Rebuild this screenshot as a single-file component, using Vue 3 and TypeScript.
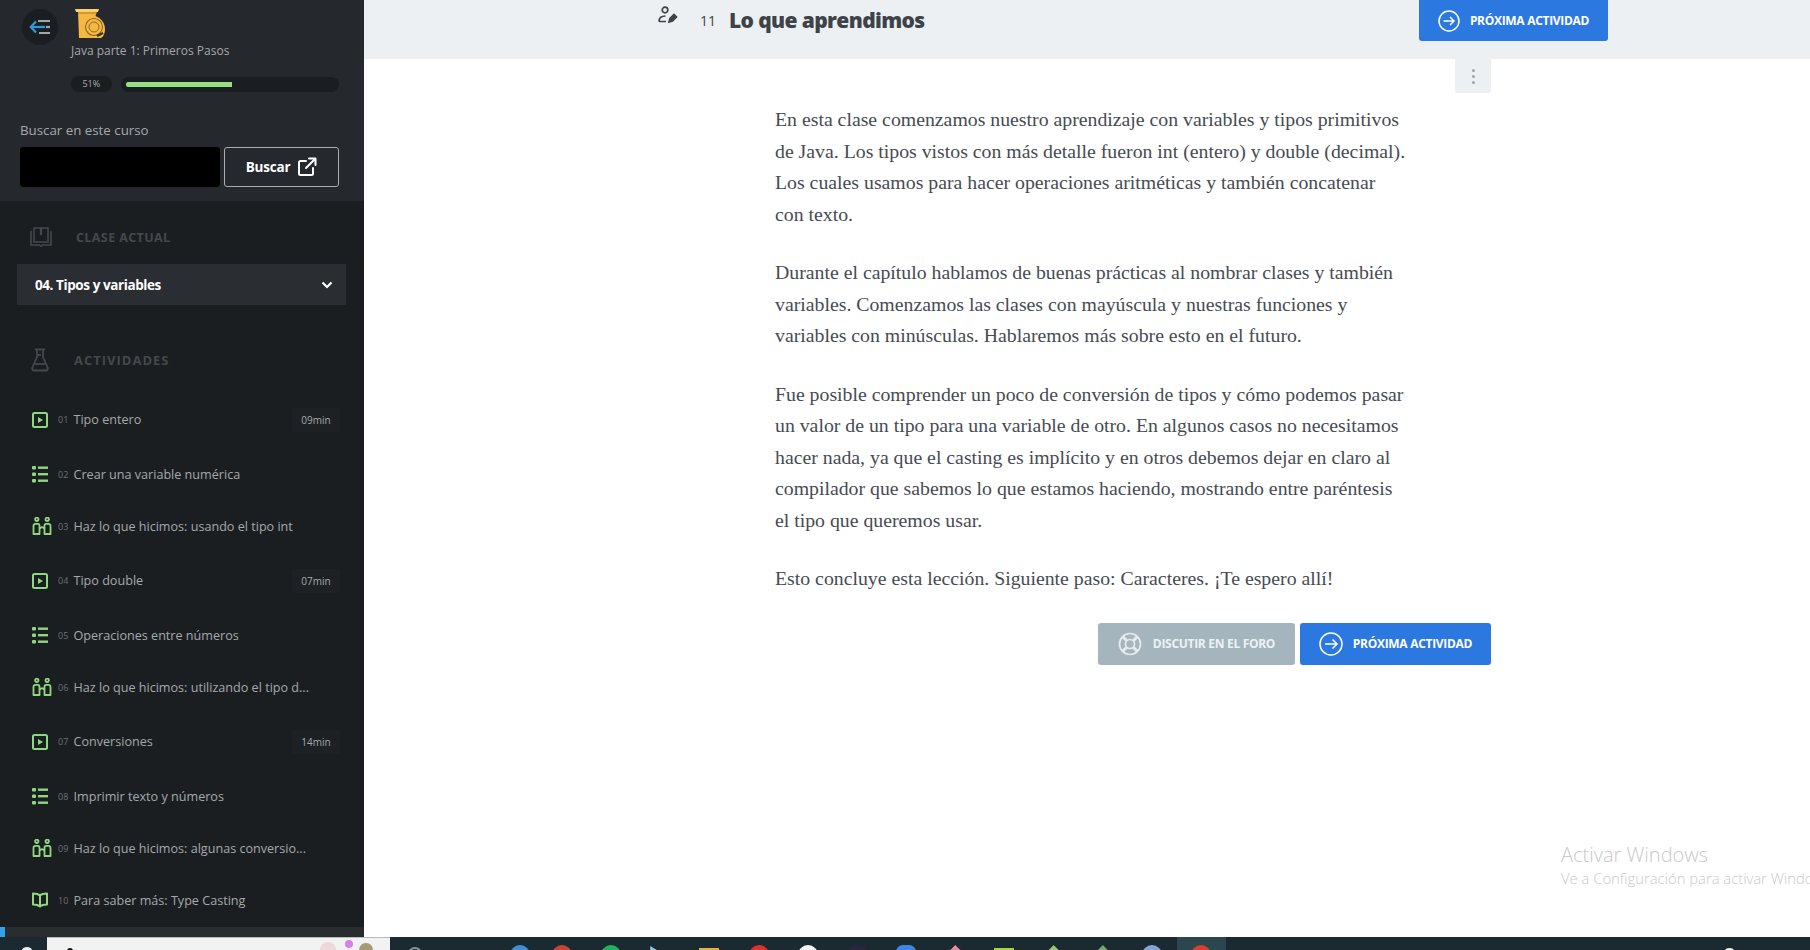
<script setup lang="ts">
type Kind = 'video' | 'list' | 'practice' | 'book'

interface Activity {
  num: string
  title: string
  kind: Kind
  time?: string
}

const activities: Activity[] = [
  { num: '01', title: 'Tipo entero', kind: 'video', time: '09min' },
  { num: '02', title: 'Crear una variable numérica', kind: 'list' },
  { num: '03', title: 'Haz lo que hicimos: usando el tipo int', kind: 'practice' },
  { num: '04', title: 'Tipo double', kind: 'video', time: '07min' },
  { num: '05', title: 'Operaciones entre números', kind: 'list' },
  { num: '06', title: 'Haz lo que hicimos: utilizando el tipo d...', kind: 'practice' },
  { num: '07', title: 'Conversiones', kind: 'video', time: '14min' },
  { num: '08', title: 'Imprimir texto y números', kind: 'list' },
  { num: '09', title: 'Haz lo que hicimos: algunas conversio...', kind: 'practice' },
  { num: '10', title: 'Para saber más: Type Casting', kind: 'book' }
]

const progress = 51

// iconos de la barra de tareas, solo asoma la parte de arriba
const taskIcons = [
  { color: '#3f8fd8', shape: 'round' },
  { color: '#c8452f', shape: 'round' },
  { color: '#1fb45a', shape: 'round' },
  { color: '#8fc4e8', shape: 'tri' },
  { color: '#e3b23c', shape: 'folder' },
  { color: '#d9342c', shape: 'round' },
  { color: '#f5f5f5', shape: 'round' },
  { color: '#2a2440', shape: 'round' },
  { color: '#3d86e6', shape: 'soft' },
  { color: '#e88b9a', shape: 'peak' },
  { color: '#a8d838', shape: 'folder' },
  { color: '#9cc46c', shape: 'peak' },
  { color: '#6fa868', shape: 'peak' },
  { color: '#7ea8dc', shape: 'round' },
  { color: '#d8402c', shape: 'round' }
]
</script>

<template>
  <div class="page">
    <div class="layout">
      <aside class="sidebar">
        <div class="sidebar-scroll">
          <section class="course">
            <div class="course-head">
              <button class="back">
                <svg width="22" height="16" viewBox="0 0 22 16" fill="none" stroke-width="2.2">
                  <path d="M3 8H16" stroke="#2f9bd6" />
                  <path d="M7 2.500 1.800 8 7 13.500" stroke="#2f9bd6" />
                  <path d="M9 2H21M10 14H21" stroke="#9fa5a9" />
                  <path d="M17 8H21" stroke="#9fa5a9" />
                </svg>
              </button>
              <div class="course-info">
                <svg class="logo" width="32" height="31" viewBox="0 0 32 31">
                  <path d="M4 3H23L21.500 8C27 10 31 15 31 21C31 26 29 29 27 30H5Z" fill="#f5b942" />
                  <path d="M1 1H25L24 4H2Z" fill="#fbd06f" />
                  <path d="M4 5H23" stroke="#a9782a" stroke-width="1" />
                  <circle cx="20" cy="19" r="8.500" fill="none" stroke="#8a6a2a" stroke-width="1.100" />
                  <circle cx="20" cy="19" r="5" fill="none" stroke="#8a6a2a" stroke-width="1" />
                  <path d="M23 28 29 25" stroke="#3a3020" stroke-width="2.200" />
                </svg>
                <div class="course-title">Java parte 1: Primeros Pasos</div>
              </div>
            </div>
            <div class="progress-row">
              <span class="percent">{{ progress }}%</span>
              <div class="bar">
                <div class="bar-fill" :style="{ width: progress + '%' }"></div>
              </div>
            </div>
            <label class="search-label">Buscar en este curso</label>
            <div class="search-row">
              <div class="search-input"></div>
              <button class="search-btn">
                Buscar
                <svg width="20" height="20" viewBox="0 0 20 20" fill="none" stroke="#fff" stroke-width="2" stroke-linecap="round" stroke-linejoin="round">
                  <path d="M9 4H3.500A1.500 1.500 0 0 0 2 5.500v11A1.500 1.500 0 0 0 3.500 18h11a1.500 1.500 0 0 0 1.500-1.500V11" />
                  <path d="M12 1.500h6.500V8M18.500 1.500 9 11" />
                </svg>
              </button>
            </div>
          </section>

          <div class="section-head current">
            <svg width="22" height="20" viewBox="0 0 22 20" fill="none" stroke="#44484c" stroke-width="1.600">
              <path d="M4 1H18V15H4ZM1 4V18H9.500L11 19.500 12.500 18H21V4" />
              <path d="M11 1V8" stroke-width="2.200" />
            </svg>
            <span>CLASE ACTUAL</span>
          </div>
          <div class="dropdown">
            <span>04. Tipos y variables</span>
            <svg width="12" height="8" viewBox="0 0 12 8" fill="none" stroke="#fff" stroke-width="2.200">
              <path d="M1.500 1.500 6 6 10.500 1.500" />
            </svg>
          </div>

          <div class="section-head activities">
            <svg width="18" height="24" viewBox="0 0 18 24" fill="none" stroke="#44484c" stroke-width="1.800" stroke-linejoin="round">
              <path d="M4 1.500H14M6 1.500V9L1.500 19.500A2 2 0 0 0 3.500 22.500H14.500A2 2 0 0 0 16.500 19.500L12 9V1.500M6 7H10" />
              <path d="M3.500 16H14.500" />
            </svg>
            <span>ACTIVIDADES</span>
          </div>

          <ul class="activity-list">
            <li v-for="item in activities" :key="item.num" class="activity" :class="item.kind">
              <span class="kind-icon">
                <svg v-if="item.kind === 'video'" width="16" height="16" viewBox="0 0 16 16" fill="none">
                  <rect x="1" y="1" width="14" height="14" rx="1.500" stroke="#8fd880" stroke-width="2" />
                  <path d="M6 5V11L11 8Z" fill="#8fd880" />
                </svg>
                <svg v-else-if="item.kind === 'list'" width="16" height="17" viewBox="0 0 16 17" fill="#8fd880">
                  <rect x="0" y="0" width="4" height="3.500" rx="1" />
                  <rect x="0" y="6.500" width="4" height="3.500" rx="1" />
                  <rect x="0" y="13" width="4" height="3.500" rx="1" />
                  <rect x="6" y="0.500" width="10" height="2.400" />
                  <rect x="6" y="7" width="10" height="2.400" />
                  <rect x="6" y="13.500" width="10" height="2.400" />
                </svg>
                <svg v-else-if="item.kind === 'practice'" width="20" height="18" viewBox="0 0 20 18" fill="none" stroke="#8fd880" stroke-width="1.800" stroke-linejoin="round">
                  <circle cx="4.800" cy="2.300" r="1.700" />
                  <circle cx="15.200" cy="2.300" r="1.700" />
                  <path d="M1.500 17V9Q1.500 6.800 3.500 6.800H6Q7.500 6.800 7.500 9V17ZM12.500 17V9Q12.500 6.800 14 6.800H16.500Q18.500 6.800 18.500 9V17Z" />
                  <path d="M7.500 11.500Q10 9 12.500 11.500" />
                </svg>
                <svg v-else width="16" height="16" viewBox="0 0 16 16" fill="none" stroke="#8fd880" stroke-width="2" stroke-linejoin="round">
                  <path d="M8 3.500C6.500 2 3.500 1.500 1 1.500V12.500C3.500 12.500 6.500 13 8 14.500 9.500 13 12.500 12.500 15 12.500V1.500C12.500 1.500 9.500 2 8 3.500ZM8 3.500V14.500" />
                </svg>
              </span>
              <span class="num">{{ item.num }}</span>
              <span class="title">{{ item.title }}</span>
              <span v-if="item.time" class="time">{{ item.time }}</span>
            </li>
          </ul>
        </div>
        <div class="scrollbar"><div class="thumb"></div></div>
      </aside>

      <main class="main">
        <header class="topbar">
          <svg class="edit-icon" width="20" height="18" viewBox="0 0 20 18" fill="none" stroke="#3d4349" stroke-width="1.700">
            <circle cx="7" cy="4" r="2.800" />
            <path d="M1 15.500C1 11.500 3.500 10 7.500 10M1 15.500H8" />
            <path d="M11 16 12 12.500 16 8.500 18.500 11 14.500 15Z" fill="#3d4349" />
          </svg>
          <span class="lesson-num">11</span>
          <h1 class="lesson-title">Lo que aprendimos</h1>
          <button class="next-btn top">
            <svg width="22" height="22" viewBox="0 0 22 22" fill="none" stroke="#fff" stroke-width="1.500">
              <circle cx="11" cy="11" r="10" />
              <path d="M5.500 11H16M12 7 16 11 12 15" />
            </svg>
            PRÓXIMA ACTIVIDAD
          </button>
        </header>

        <div class="content">
          <div class="kebab-row">
            <div class="kebab"><i></i><i></i><i></i></div>
          </div>
          <article class="text">
            <p>En esta clase comenzamos nuestro aprendizaje con variables y tipos primitivos<br>de Java. Los tipos vistos con más detalle fueron int (entero) y double (decimal).<br>Los cuales usamos para hacer operaciones aritméticas y también concatenar<br>con texto.</p>
            <p>Durante el capítulo hablamos de buenas prácticas al nombrar clases y también<br>variables. Comenzamos las clases con mayúscula y nuestras funciones y<br>variables con minúsculas. Hablaremos más sobre esto en el futuro.</p>
            <p>Fue posible comprender un poco de conversión de tipos y cómo podemos pasar<br>un valor de un tipo para una variable de otro. En algunos casos no necesitamos<br>hacer nada, ya que el casting es implícito y en otros debemos dejar en claro al<br>compilador que sabemos lo que estamos haciendo, mostrando entre paréntesis<br>el tipo que queremos usar.</p>
            <p>Esto concluye esta lección. Siguiente paso: Caracteres. ¡Te espero allí!</p>
          </article>
          <div class="actions">
            <button class="forum-btn">
              <svg width="24" height="24" viewBox="0 0 24 24" fill="none" stroke="#e6ebee" stroke-width="1.700">
                <circle cx="12" cy="12" r="10.500" />
                <circle cx="12" cy="12" r="4.500" />
                <path d="M4.500 4.500 8.800 8.800M19.500 4.500 15.200 8.800M4.500 19.500 8.800 15.200M19.500 19.500 15.200 15.200" stroke-width="3" />
              </svg>
              DISCUTIR EN EL FORO
            </button>
            <button class="next-btn">
              <svg width="24" height="24" viewBox="0 0 24 24" fill="none" stroke="#fff" stroke-width="1.500">
                <circle cx="12" cy="12" r="11" />
                <path d="M6 12H18M13.500 7.500 18 12 13.500 16.500" />
              </svg>
              PRÓXIMA ACTIVIDAD
            </button>
          </div>
        </div>

        <div class="watermark">
          <div class="wm-title">Activar Windows</div>
          <div class="wm-sub">Ve a Configuración para activar Windows.</div>
        </div>
      </main>
    </div>

    <footer class="taskbar">
      <div class="start"><i></i></div>
      <div class="task-search">
        <i class="lens"></i>
        <i class="doodle pink"></i>
        <i class="doodle violet"></i>
        <i class="doodle brown"></i>
      </div>
      <div class="task-icons">
        <span
          v-for="(icon, i) in taskIcons"
          :key="i"
          class="task-icon"
          :class="{ active: i === taskIcons.length - 1 }"
        ><i :class="icon.shape" :style="{ background: icon.color }"></i></span>
      </div>
      <i class="cortana"></i>
      <i class="tray"></i>
    </footer>
  </div>
</template>

<style>
html,
body {
  margin: 0;
  background: #fff;
}
</style>

<style scoped>
.page {
  width: 1810px;
  height: 950px;
  display: flex;
  flex-direction: column;
  overflow: hidden;
  font-family: "Open Sans", "Liberation Sans", sans-serif;
}
.layout {
  flex: 1;
  min-height: 0;
  display: flex;
}
button {
  font-family: inherit;
  cursor: pointer;
}

/* sidebar */
.sidebar {
  width: 364px;
  flex-shrink: 0;
  display: flex;
  flex-direction: column;
  background: #1b1e21;
}
.sidebar-scroll {
  flex: 1;
  min-height: 0;
  overflow: hidden;
}
.course {
  height: 201px;
  box-sizing: border-box;
  padding: 8px 25px 0 20px;
  background: #25282c;
}
.course-head {
  display: flex;
  align-items: flex-start;
  gap: 13px;
}
.back {
  width: 36px;
  height: 36px;
  margin: 1px 0 0 2px;
  padding: 0;
  border: 0;
  border-radius: 50%;
  background: #1b1e21;
  display: flex;
  align-items: center;
  justify-content: center;
}
.course-info {
  display: flex;
  flex-direction: column;
}
.logo {
  margin-left: 3px;
}
.course-title {
  margin-top: 4px;
  font-size: 12px;
  line-height: 16px;
  color: #a4a9ac;
  white-space: nowrap;
}
.progress-row {
  display: flex;
  align-items: center;
  gap: 9px;
  margin: 17px 0 0 51px;
}
.percent {
  width: 41px;
  height: 16px;
  line-height: 16px;
  border-radius: 8px;
  background: #1b1e21;
  color: #a4a9ac;
  font-size: 9px;
  text-align: center;
}
.bar {
  width: 221px;
  height: 15px;
  box-sizing: border-box;
  padding: 5px;
  border-radius: 8px;
  background: #1b1e21;
}
.bar-fill {
  height: 5px;
  border-radius: 2px 0 0 2px;
  background: #96de82;
}
.search-label {
  display: block;
  margin-top: 29px;
  font-size: 13.300px;
  line-height: 18px;
  color: #a4a9ac;
}
.search-row {
  display: flex;
  gap: 4px;
  margin-top: 8px;
}
.search-input {
  width: 200px;
  height: 40px;
  border-radius: 3px;
  background: #000;
}
.search-btn {
  width: 115px;
  height: 40px;
  box-sizing: border-box;
  border: 1px solid #a9adb0;
  border-radius: 3px;
  background: transparent;
  color: #fff;
  font-size: 13.500px;
  font-weight: 700;
  letter-spacing: -0.200px;
  display: flex;
  align-items: center;
  justify-content: center;
  gap: 7px;
}
.section-head {
  display: flex;
  align-items: center;
  font-weight: 700;
  color: #44484c;
}
.section-head.current {
  height: 24px;
  margin-top: 24px;
  padding-left: 30px;
  gap: 24px;
  font-size: 12.500px;
  letter-spacing: 0.400px;
}
.dropdown {
  height: 41px;
  margin: 15px 18px 0 17px;
  padding: 0 13px 0 18px;
  display: flex;
  align-items: center;
  justify-content: space-between;
  background: #2a2d31;
  color: #fff;
  font-size: 13.500px;
  font-weight: 700;
  letter-spacing: -0.420px;
}
.section-head.activities {
  height: 24px;
  margin-top: 43px;
  padding-left: 31px;
  gap: 25px;
  font-size: 13px;
  letter-spacing: 1px;
}
.activity-list {
  list-style: none;
  margin: 19px 0 0;
  padding: 0 24px 0 32px;
}
.activity {
  height: 52px;
  display: flex;
  align-items: center;
  color: #a4a9ac;
}
.activity.video {
  height: 57px;
}
.kind-icon {
  width: 26px;
  flex-shrink: 0;
  display: flex;
  align-items: center;
}
.num {
  width: 15.500px;
  flex-shrink: 0;
  font-size: 9px;
  color: #6c7074;
}
.title {
  flex: 1;
  font-size: 12.600px;
  white-space: nowrap;
}
.time {
  width: 48px;
  height: 24px;
  line-height: 24px;
  text-align: center;
  font-size: 10px;
  color: #a4a9ac;
  background: #1e2124;
  border-radius: 2px;
}
.scrollbar {
  height: 10px;
  flex-shrink: 0;
  background: #2a2d30;
}
.thumb {
  width: 5px;
  height: 10px;
  background: #2fa3e6;
}

/* contenido */
.main {
  flex: 1;
  min-width: 0;
  position: relative;
  background: #fff;
}
.topbar {
  height: 59px;
  box-sizing: border-box;
  padding-left: 294px;
  display: flex;
  align-items: flex-start;
  background: #edf0f2;
  color: #3d4349;
}
.edit-icon {
  margin-top: 6px;
  flex-shrink: 0;
}
.lesson-num {
  margin: 11px 0 0 22px;
  font-size: 14px;
  line-height: 20px;
}
.lesson-title {
  width: 195px;
  margin: 3px 0 0 13px;
  font-size: 21px;
  line-height: 34px;
  font-weight: 800;
  letter-spacing: -0.620px;
  white-space: nowrap;
}
.next-btn,
.forum-btn {
  border: 0;
  border-radius: 3px;
  color: #fff;
  font-size: 12px;
  font-weight: 700;
  letter-spacing: -0.300px;
  display: flex;
  align-items: center;
  justify-content: center;
  white-space: nowrap;
}
.next-btn {
  width: 191px;
  height: 42px;
  gap: 10px;
  background: #2b78e0;
}
.next-btn.top {
  width: 189px;
  height: 41px;
  margin-left: 495px;
  border-radius: 0 0 3px 3px;
}
.forum-btn {
  width: 197px;
  height: 42px;
  gap: 11px;
  background: #a5b5bd;
  color: #eef1f3;
}
.content {
  width: 716px;
  margin-left: 411px;
}
.kebab-row {
  display: flex;
  justify-content: flex-end;
}
.kebab {
  width: 36px;
  height: 34px;
  display: flex;
  flex-direction: column;
  align-items: center;
  justify-content: center;
  gap: 3px;
  background: #edf0f2;
  border-radius: 0 0 2px 2px;
}
.kebab i {
  width: 3px;
  height: 3px;
  border-radius: 50%;
  background: #9ba5ab;
}
.text {
  padding-top: 11px;
  font-family: "Liberation Serif", "Noto Serif", serif;
  font-size: 19.800px;
  line-height: 31.500px;
  color: #464b52;
}
.text p {
  margin: 0 0 27px;
  white-space: nowrap;
}
.text p:last-child {
  margin-bottom: 0;
}
.actions {
  display: flex;
  justify-content: flex-end;
  gap: 5px;
  margin-top: 28px;
}
.watermark {
  position: absolute;
  left: 1197px;
  top: 842px;
  white-space: nowrap;
  color: #c9c9c9;
  font-weight: 300;
}
.wm-title {
  font-size: 20px;
  line-height: 26px;
}
.wm-sub {
  font-size: 14.800px;
  line-height: 20px;
}

/* barra de tareas */
.taskbar {
  height: 13px;
  flex-shrink: 0;
  display: flex;
  background: #1b2a30;
  overflow: hidden;
  position: relative;
}
.start {
  width: 47px;
  flex-shrink: 0;
  position: relative;
}
.start i {
  position: absolute;
  left: 22px;
  top: 10px;
  width: 10px;
  height: 6px;
  border-radius: 50%;
  background: #eee;
}
.task-search {
  width: 343px;
  flex-shrink: 0;
  position: relative;
  box-sizing: border-box;
  border-top: 1px solid #b9bcbd;
  background: #f1f2f2;
}
.lens {
  position: absolute;
  left: 20px;
  top: 10px;
  width: 6px;
  height: 6px;
  border-radius: 50%;
  background: #111;
}
.doodle {
  position: absolute;
  border-radius: 50%;
}
.pink {
  left: 273px;
  top: 4px;
  width: 16px;
  height: 16px;
  background: #edd8dc;
}
.violet {
  left: 298px;
  top: 2px;
  width: 8px;
  height: 8px;
  background: #d880e8;
}
.brown {
  left: 312px;
  top: 5px;
  width: 14px;
  height: 14px;
  background: #a89a70;
}
.task-icons {
  display: flex;
  margin-left: 105px;
}
.task-icon {
  width: 49.200px;
  height: 13px;
  display: flex;
  justify-content: center;
  flex-shrink: 0;
}
.task-icon:first-child {
  margin-right: -7px;
}
.task-icon i {
  display: block;
  width: 20px;
  height: 20px;
  margin-top: 8px;
}
.task-icon .round {
  border-radius: 50%;
}
.task-icon .soft {
  border-radius: 7px 7px 0 0;
}
.task-icon .folder {
  height: 12px;
  margin-top: 11px;
}
.task-icon .tri {
  clip-path: polygon(0 0, 100% 60%, 0 100%);
  margin-top: 9px;
}
.task-icon .peak {
  clip-path: polygon(50% 0, 100% 50%, 100% 100%, 0 100%, 0 50%);
}
.task-icon.active {
  background: #2c4650;
}
.cortana {
  position: absolute;
  left: 408px;
  top: 10px;
  width: 14px;
  height: 14px;
  box-sizing: border-box;
  border: 2px solid #8a9498;
  border-radius: 50%;
}
.tray {
  position: absolute;
  left: 1725px;
  top: 11px;
  width: 9px;
  height: 6px;
  border-radius: 50%;
  background: #eee;
}
</style>
